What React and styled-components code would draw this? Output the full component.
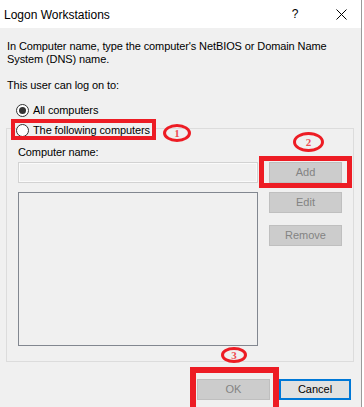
import React from "react";
import styled, { createGlobalStyle } from "styled-components";

const Global = createGlobalStyle`
  html, body { margin: 0; padding: 0; background: #ffffff; overflow: hidden; }
  body { font-family: "Liberation Sans", Arial, sans-serif; }
  * { box-sizing: border-box; }
`;

const Page = styled.div`
  position: relative;
  width: 364px;
  height: 407px;
  overflow: hidden;
  background: #ffffff;
`;

const Window = styled.div`
  width: 362px;
  height: 407px;
  background: #f0f0f0;
  border-right: 1px solid #9a9a9a;
  display: flex;
  flex-direction: column;
`;

const TitleBar = styled.div`
  height: 28px;
  background: #ffffff;
  display: flex;
  align-items: center;
  padding-left: 4px;
  gap: 6px;
`;

const Title = styled.div`
  flex: 1;
  font-size: 12px;
  color: #000;
  padding-top: 1px;
`;

const CaptionButton = styled.div`
  width: 40px;
  height: 28px;
  display: flex;
  align-items: center;
  justify-content: center;
  font-size: 12px;
  color: #000;
`;

const Content = styled.div`
  padding: 12px 7px 0 7px;
  display: flex;
  flex-direction: column;
  font-size: 11px;
  line-height: 13px;
  color: #000;
  letter-spacing: -0.1px;
`;

const Text = styled.div`
  margin-top: ${(p) => p.$mt || 0}px;
`;

const RadioRow = styled.label`
  display: flex;
  align-items: center;
  height: 20px;
  gap: 4px;
  margin-left: ${(p) => p.$ml || 0}px;
  margin-top: ${(p) => p.$mt || 0}px;
  background: #f0f0f0;
  align-self: flex-start;
  padding-right: 2px;
`;

const RadioCircle = styled.span`
  width: 13px;
  height: 13px;
  border-radius: 50%;
  border: 1px solid #333333;
  background: #ffffff;
  display: flex;
  align-items: center;
  justify-content: center;
  &::after {
    content: "";
    display: ${(p) => (p.$checked ? "block" : "none")};
    width: 7px;
    height: 7px;
    border-radius: 50%;
    background: #333333;
  }
`;

const GroupBox = styled.div`
  margin-top: 8px;
  margin-left: -1px;
  border: 1px solid #dcdcdc;
  display: flex;
  flex-direction: column;
  padding: 0 11px 15px 11px;
`;

const Legend = styled(RadioRow)`
  margin-top: -9px;
  margin-left: -2px;
`;

const Grid = styled.div`
  margin-top: 3px;
  display: grid;
  grid-template-columns: 240px 73px;
  column-gap: 11px;
  align-items: start;
`;

const TextBox = styled.div`
  height: 21px;
  border: 1px solid #d2d2d2;
  box-shadow: inset 0 0 0 1px #fafafa;
  background: #f0f0f0;
`;

const ListBox = styled.div`
  margin-top: 9px;
  height: 154px;
  border: 1px solid #828790;
  background: #f0f0f0;
`;

const ButtonColumn = styled.div`
  display: flex;
  flex-direction: column;
  gap: 12px;
`;

const Button = styled.div`
  width: ${(p) => p.$w || 73}px;
  height: 21px;
  margin-top: ${(p) => p.$mt || 0}px;
  display: flex;
  align-items: center;
  justify-content: center;
  font-size: 11px;
  letter-spacing: 0;
  border: ${(p) => (p.$default ? "2px solid #0078d7" : p.$disabled ? "1px solid #bfbfbf" : "1px solid #adadad")};
  background: ${(p) => (p.$disabled ? "#cccccc" : "#e1e1e1")};
  color: ${(p) => (p.$disabled ? "#838383" : "#000000")};
`;

const Footer = styled.div`
  margin-top: 17px;
  display: flex;
  justify-content: flex-end;
  gap: 9px;
  padding-right: 3px;
`;

const RedBox = styled.div`
  position: absolute;
  left: ${(p) => p.$x}px;
  top: ${(p) => p.$y}px;
  width: ${(p) => p.$w}px;
  height: ${(p) => p.$h}px;
  border: ${(p) => p.$t}px solid #ed1c24;
  pointer-events: none;
`;

const Marker = styled.div`
  position: absolute;
  left: ${(p) => p.$x}px;
  top: ${(p) => p.$y}px;
  width: ${(p) => p.$w}px;
  height: ${(p) => p.$h}px;
  border: 3px solid #ed1c24;
  border-radius: 50%;
  display: flex;
  align-items: center;
  justify-content: center;
  font-family: "Liberation Serif", serif;
  font-weight: bold;
  font-size: 11px;
  color: #ef4b52;
  line-height: 1;
`;

export default function App() {
  return (
    <Page>
      <Global />
      <Window>
        <TitleBar>
          <Title>Logon Workstations</Title>
          <CaptionButton>?</CaptionButton>
          <CaptionButton>
            <svg width="11" height="11" viewBox="0 0 11 11">
              <path d="M0.5 0.5 L10.5 10.5 M10.5 0.5 L0.5 10.5" stroke="#000" strokeWidth="1" fill="none" />
            </svg>
          </CaptionButton>
        </TitleBar>
        <Content>
          <Text>
            In Computer name, type the computer's NetBIOS or Domain Name
            <br />
            System (DNS) name.
          </Text>
          <Text $mt={13}>This user can log on to:</Text>
          <RadioRow $ml={9} $mt={8}>
            <RadioCircle $checked />
            All computers
          </RadioRow>
          <GroupBox>
            <Legend>
              <RadioCircle />
              The following computers
            </Legend>
            <Text $mt={6}>Computer name:</Text>
            <Grid>
              <div>
                <TextBox />
                <ListBox />
              </div>
              <ButtonColumn>
                <Button $disabled>Add</Button>
                <Button $disabled $mt={-3}>Edit</Button>
                <Button $disabled>Remove</Button>
              </ButtonColumn>
            </Grid>
          </GroupBox>
          <Footer>
            <Button $disabled>OK</Button>
            <Button $default $w={72}>Cancel</Button>
          </Footer>
        </Content>
      </Window>

      <RedBox $x={11} $y={119} $w={145} $h={21} $t={4} />
      <RedBox $x={259} $y={156} $w={93} $h={32} $t={5} />
      <RedBox $x={190} $y={367} $w={89} $h={50} $t={6} />

      <Marker $x={163} $y={124} $w={28} $h={18}>1</Marker>
      <Marker $x={293} $y={132} $w={31} $h={20}>2</Marker>
      <Marker $x={221} $y={347} $w={26} $h={16}>3</Marker>
    </Page>
  );
}
